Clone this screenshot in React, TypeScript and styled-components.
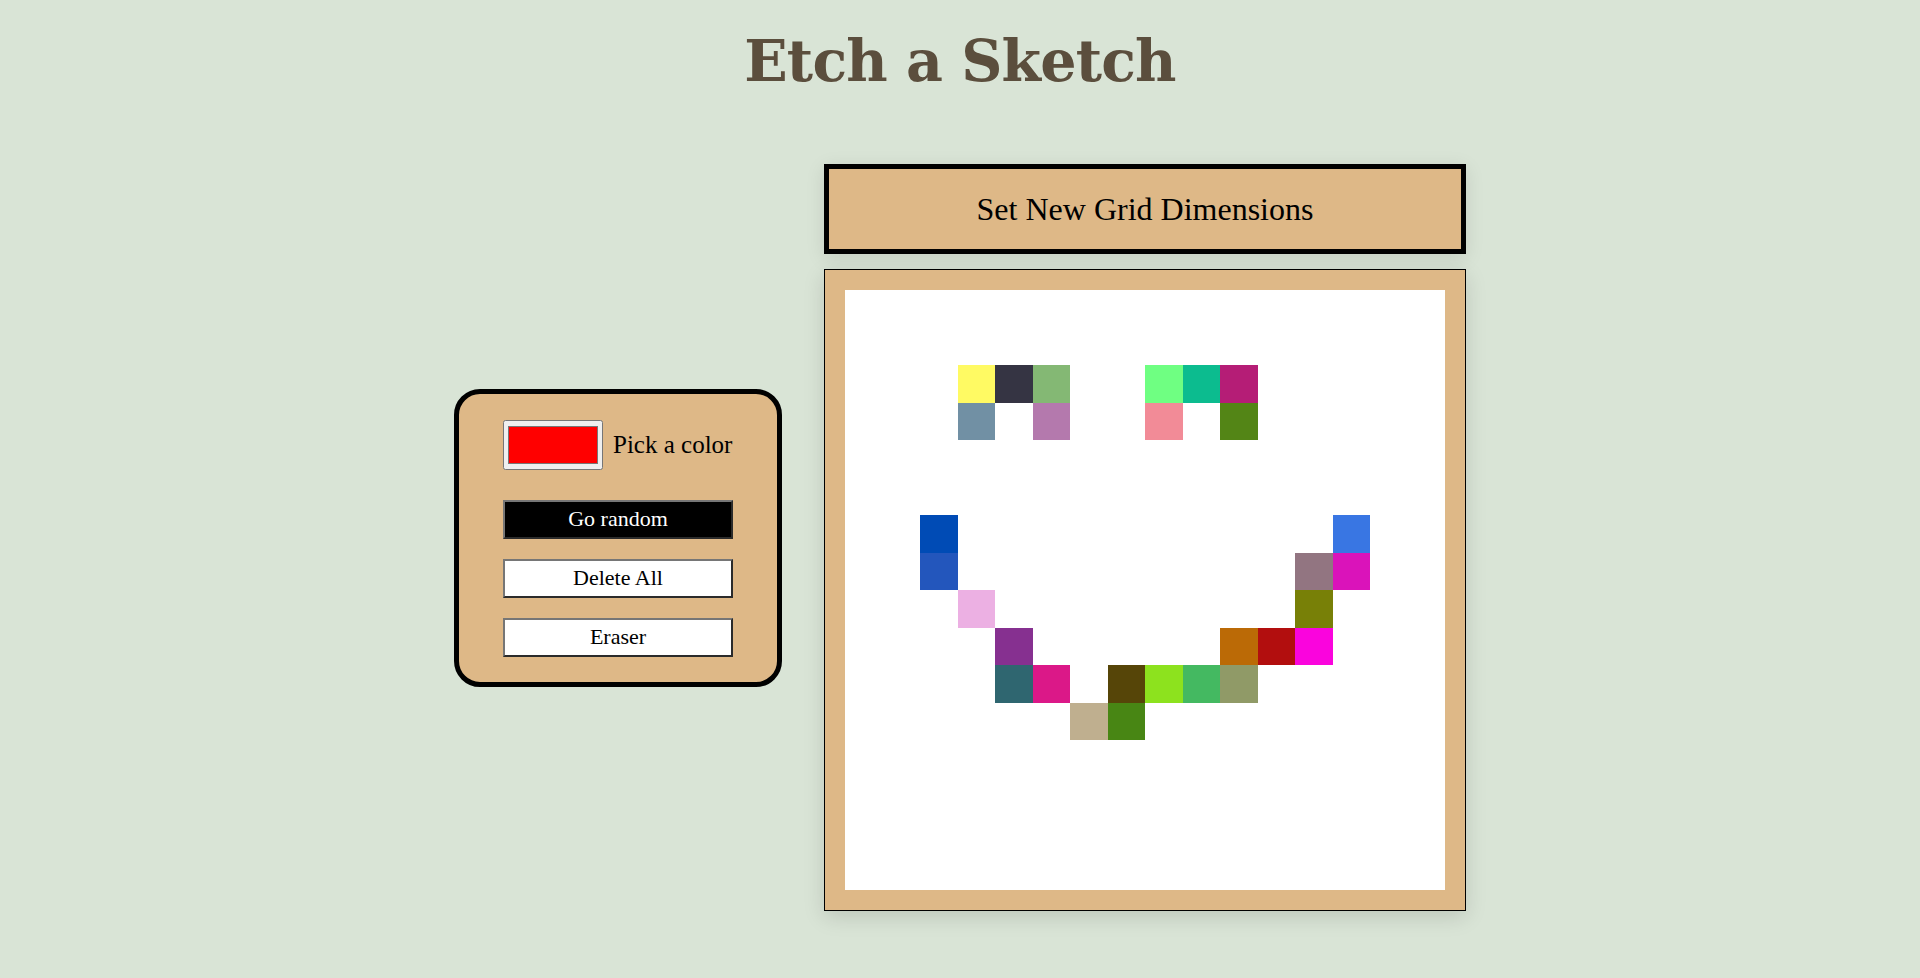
import React from "react";
import styled, { createGlobalStyle } from "styled-components";

const GlobalStyle = createGlobalStyle`
  html, body {
    margin: 0;
    padding: 0;
    background: #d9e4d6;
    font-family: "Liberation Serif", "Times New Roman", serif;
  }
`;

const Page = styled.div`
  display: flex;
  flex-direction: column;
  align-items: center;
  min-height: 978px;
`;

const Title = styled.h1`
  margin: 28px 0 0;
  font-family: "DejaVu Serif", "Liberation Serif", serif;
  font-weight: 700;
  font-size: 57px;
  line-height: 66px;
  color: #5b4e3d;
  letter-spacing: -0.8px;
`;

const Main = styled.main`
  display: flex;
  align-items: center;
  gap: 42px;
  margin-top: 70px;
`;

const Panel = styled.section`
  box-sizing: border-box;
  width: 328px;
  padding: 26px 44px 25px;
  background: #deb887;
  border: 5px solid #000;
  border-radius: 26px;
  display: flex;
  flex-direction: column;
`;

const ColorRow = styled.label`
  display: flex;
  align-items: center;
  gap: 10px;
  margin-bottom: 30px;
  font-size: 25px;
  color: #000;
  white-space: nowrap;
`;

const ColorInput = styled.input`
  flex: none;
  width: 100px;
  height: 50px;
  margin: 0;
  box-sizing: border-box;
`;

const Buttons = styled.div`
  display: flex;
  flex-direction: column;
  gap: 20px;
`;

const ToolButton = styled.button<{ $active?: boolean }>`
  box-sizing: border-box;
  width: 230px;
  height: 39px;
  padding: 0;
  margin: 0;
  font-family: "Liberation Serif", "Times New Roman", serif;
  font-size: 22px;
  background: ${(p) => (p.$active ? "#000" : "#fff")};
  color: ${(p) => (p.$active ? "#fff" : "#000")};
  border-style: solid;
  border-width: 2px;
  border-color: #767676 #2b2b2b #2b2b2b #767676;
  cursor: pointer;
`;

const Column = styled.div`
  display: flex;
  flex-direction: column;
  gap: 15px;
  width: 642px;
`;

const DimButton = styled.button`
  box-sizing: border-box;
  width: 642px;
  height: 90px;
  margin: 0;
  padding: 0;
  background: #deb887;
  border: 5px solid #000;
  font-family: "Liberation Serif", "Times New Roman", serif;
  font-size: 32px;
  color: #000;
  box-shadow: 0 4px 18px rgba(0, 0, 0, 0.1);
  cursor: pointer;
`;

const Board = styled.div`
  box-sizing: border-box;
  width: 642px;
  height: 642px;
  padding: 20px;
  background: #deb887;
  border: 1px solid #000;
  box-shadow: 0 6px 20px rgba(0, 0, 0, 0.13);
`;

const Grid = styled.div`
  width: 600px;
  height: 600px;
  display: grid;
  grid-template-columns: repeat(16, 1fr);
  grid-template-rows: repeat(16, 1fr);
  background: #fff;
`;

const Cell = styled.div<{ $color: string }>`
  background: ${(p) => p.$color};
`;

const painted: Record<string, string> = {
  "2,3": "#fffa63",
  "2,4": "#353443",
  "2,5": "#84b874",
  "2,8": "#6fff82",
  "2,9": "#0cbc8f",
  "2,10": "#b51d76",
  "3,3": "#7190a4",
  "3,5": "#b479ad",
  "3,8": "#f28b97",
  "3,10": "#538516",
  "6,2": "#004bb5",
  "6,13": "#3976e3",
  "7,2": "#2356bc",
  "7,12": "#927581",
  "7,13": "#da13ba",
  "8,3": "#ecb0e3",
  "8,12": "#788007",
  "9,4": "#863090",
  "9,10": "#bb6a06",
  "9,11": "#b20e0e",
  "9,12": "#fa04dd",
  "10,4": "#2f6670",
  "10,5": "#db1888",
  "10,7": "#564508",
  "10,8": "#8de21e",
  "10,9": "#44b961",
  "10,10": "#909a67",
  "11,6": "#bfaf8f",
  "11,7": "#488614",
};

const cells = Array.from({ length: 256 }, (_, i) => {
  const r = Math.floor(i / 16);
  const c = i % 16;
  return painted[`${r},${c}`] ?? "#ffffff";
});

export default function App() {
  return (
    <>
      <GlobalStyle />
      <Page>
        <Title>Etch a Sketch</Title>
        <Main>
          <Panel>
            <ColorRow>
              <ColorInput type="color" defaultValue="#ff0000" />
              Pick a color
            </ColorRow>
            <Buttons>
              <ToolButton $active>Go random</ToolButton>
              <ToolButton>Delete All</ToolButton>
              <ToolButton>Eraser</ToolButton>
            </Buttons>
          </Panel>
          <Column>
            <DimButton>Set New Grid Dimensions</DimButton>
            <Board>
              <Grid>
                {cells.map((color, i) => (
                  <Cell key={i} $color={color} />
                ))}
              </Grid>
            </Board>
          </Column>
        </Main>
      </Page>
    </>
  );
}
